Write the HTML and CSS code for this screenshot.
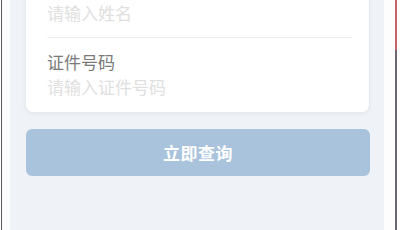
FILE: index.html
```html
<!DOCTYPE html>
<html lang="zh-CN">
<head>
<meta charset="utf-8">
<title>查询</title>
<link rel="stylesheet" href="styles.css">
</head>
<body>
<div class="device">
  <div class="edge edge-left"></div>
  <div class="gutter gutter-left"></div>
  <main class="screen">
    <section class="card">
      <div class="field field-first">
        <div class="input placeholder">请输入姓名</div>
      </div>
      <div class="divider"></div>
      <div class="field field-last">
        <label class="label">证件号码</label>
        <div class="input placeholder">请输入证件号码</div>
      </div>
    </section>
    <button class="submit" type="button">立即查询</button>
  </main>
  <div class="gutter gutter-right"></div>
  <div class="edge edge-right"><div class="edge-mark"></div></div>
  <div class="gutter gutter-end"></div>
</div>
</body>
</html>
```
FILE: styles.css
```css
html, body {
  margin: 0;
  padding: 0;
  background: #ffffff;
}
body {
  width: 400px;
  height: 230px;
  overflow: hidden;
  font-family: "Noto Sans CJK SC", "Noto Sans", sans-serif;
}
.device {
  display: flex;
  height: 230px;
}
.edge {
  width: 1px;
  flex: none;
  background: #5d5868;
}
.edge-left {
  margin-left: 1px;
}
.gutter-left {
  width: 8px;
  flex: none;
  background: #fbfcfd;
}
.gutter-right {
  width: 11px;
  flex: none;
  background: #fdfdfd;
}
.edge-right {
  width: 2px;
  background: #6b6870;
}
.edge-mark {
  height: 50px;
  width: 3px;
  background: #c6636a;
}
.gutter-end {
  flex: 1;
  background: #ffffff;
}
.screen {
  width: 374px;
  flex: none;
  background: #eff3f7;
  padding: 0 14px 0 15px;
  box-sizing: border-box;
  display: flex;
  flex-direction: column;
}
.card {
  margin-top: -14px;
  background: #ffffff;
  border: 1px solid #e6ecf0;
  border-radius: 8px;
  padding: 0 17px 0 21px;
  box-shadow: 0 1px 3px rgba(180, 195, 210, 0.25);
}
.field {
  display: flex;
  flex-direction: column;
}
.field-first {
  padding: 13px 0 12px;
}
.field-last {
  padding: 12px 0 13px;
}
.label {
  font-size: 17px;
  line-height: 24px;
  color: #7a7a7a;
}
.input {
  font-size: 17px;
  line-height: 24px;
  margin-top: 1px;
}
.field-first .input {
  margin-top: 0;
  line-height: 25px;
}
.placeholder {
  color: #e0e0e0;
}
.divider {
  height: 1px;
  background: #eef1f3;
}
.submit {
  margin-top: 16px;
  margin-left: 1px;
  height: 47px;
  border: none;
  border-radius: 6px;
  background: #a9c3dc;
  color: #ffffff;
  font-family: "Noto Sans CJK SC", sans-serif;
  font-size: 17px;
  font-weight: bold;
  letter-spacing: 0.5px;
  padding: 0;
}
```
